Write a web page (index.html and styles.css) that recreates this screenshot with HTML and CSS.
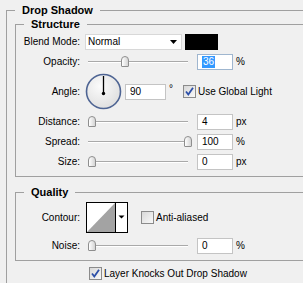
FILE: index.html
```html
<!DOCTYPE html>
<html>
<head>
<meta charset="utf-8">
<link rel="stylesheet" href="styles.css">
</head>
<body>
<div class="outer">
  <div class="title">Drop Shadow</div>
  <div class="group structure">
    <div class="title">Structure</div>
    <div class="rows">
      <div class="row">
        <div class="label">Blend Mode:</div>
        <div class="select"><span>Normal</span>
          <svg class="sel-arrow" width="7" height="4" viewBox="0 0 7 4"><polygon points="0,0 7,0 3.5,4" fill="#000"/></svg>
        </div>
        <div class="swatch"></div>
      </div>
      <div class="row">
        <div class="label">Opacity:</div>
        <div class="slider"><div class="track"></div><div class="thumb" style="left:33px"></div></div>
        <div class="field focused"><span class="sel">36</span></div>
        <div class="unit">%</div>
      </div>
      <div class="row angle-row">
        <div class="label">Angle:</div>
        <svg class="dial" width="37" height="37" viewBox="0 0 37 37">
          <defs>
            <radialGradient id="dg" cx="40%" cy="35%" r="70%">
              <stop offset="0" stop-color="#fbfbfb"/>
              <stop offset="1" stop-color="#dedede"/>
            </radialGradient>
          </defs>
          <circle cx="18.5" cy="18.5" r="17" fill="url(#dg)" stroke="#4e6493" stroke-width="1.6"/>
          <line x1="18.5" y1="3" x2="18.5" y2="20" stroke="#000" stroke-width="1.3"/>
          <circle cx="18.5" cy="20.5" r="1.7" fill="#000"/>
        </svg>
        <div class="field angle-field">90</div>
        <div class="deg">°</div>
        <svg class="check global" width="13" height="13" viewBox="0 0 13 13">
          <defs>
            <linearGradient id="cg" x1="0" y1="0" x2="1" y2="1">
              <stop offset="0" stop-color="#d6d6d6"/>
              <stop offset="1" stop-color="#fafafa"/>
            </linearGradient>
          </defs>
          <rect x="0.5" y="0.5" width="12" height="12" fill="url(#cg)" stroke="#8b8b8b"/>
          <path d="M3 6.5 L5.3 9.5 L10 2.8" fill="none" stroke="#2c4fa8" stroke-width="1.8"/>
        </svg>
        <div class="cb-text">Use Global Light</div>
      </div>
      <div class="row">
        <div class="label">Distance:</div>
        <div class="slider"><div class="track"></div><div class="thumb" style="left:0px"></div></div>
        <div class="field">4</div>
        <div class="unit">px</div>
      </div>
      <div class="row">
        <div class="label">Spread:</div>
        <div class="slider"><div class="track"></div><div class="thumb" style="left:96px"></div></div>
        <div class="field">100</div>
        <div class="unit">%</div>
      </div>
      <div class="row">
        <div class="label">Size:</div>
        <div class="slider"><div class="track"></div><div class="thumb" style="left:0px"></div></div>
        <div class="field">0</div>
        <div class="unit">px</div>
      </div>
    </div>
  </div>
  <div class="group quality">
    <div class="title">Quality</div>
    <div class="rows">
      <div class="row contour-row">
        <div class="label">Contour:</div>
        <svg class="contour" width="42" height="31" viewBox="0 0 42 31">
          <rect x="0" y="0" width="42" height="31" fill="#fff"/>
          <polygon points="1,30 29,1 29,30" fill="#a3a3a3"/>
          <rect x="0.5" y="0.5" width="41" height="30" fill="none" stroke="#000"/>
          <line x1="29.5" y1="0" x2="29.5" y2="31" stroke="#000"/>
          <polygon points="32.5,13.5 38.5,13.5 35.5,16.5" fill="#000"/>
        </svg>
        <svg class="check aa" width="13" height="13" viewBox="0 0 13 13">
          <rect x="0.5" y="0.5" width="12" height="12" fill="url(#cg)" stroke="#8b8b8b"/>
        </svg>
        <div class="cb-text">Anti-aliased</div>
      </div>
      <div class="row noise-row">
        <div class="label">Noise:</div>
        <div class="slider"><div class="track"></div><div class="thumb" style="left:0px"></div></div>
        <div class="field">0</div>
        <div class="unit">%</div>
      </div>
    </div>
  </div>
  <div class="knock">
    <svg class="check" width="13" height="13" viewBox="0 0 13 13">
      <rect x="0.5" y="0.5" width="12" height="12" fill="url(#cg)" stroke="#8b8b8b"/>
      <path d="M3 6.5 L5.3 9.5 L10 2.8" fill="none" stroke="#2c4fa8" stroke-width="1.8"/>
    </svg>
    <div class="cb-text">Layer Knocks Out Drop Shadow</div>
  </div>
</div>
</body>
</html>
```
FILE: styles.css
```css
html, body {
  margin: 0;
  padding: 0;
}
body {
  width: 303px;
  height: 283px;
  overflow: hidden;
  background: #f0f0f0;
  font-family: "Liberation Sans", Arial, sans-serif;
  font-size: 10px;
  color: #000;
}
.outer {
  box-sizing: border-box;
  margin: 10px 0 0 6px;
  width: 297px;
  height: 273px;
  border-top: 1px solid #a0a0a0;
  border-left: 1px solid #a0a0a0;
}
.title {
  width: fit-content;
  height: 13px;
  line-height: 13px;
  margin: -7px 0 0 8px;
  padding: 0 7px;
  background: #f0f0f0;
  font-weight: bold;
  font-size: 11px;
}
.group {
  box-sizing: border-box;
  margin-left: 8px;
  border: 1px solid #a0a0a0;
  border-right: none;
}
.structure {
  margin-top: 7px;
  height: 153px;
}
.quality {
  margin-top: 15px;
  height: 69px;
}
.rows {
  display: flex;
  flex-direction: column;
  gap: 3px;
  margin-top: 2px;
}
.row {
  display: flex;
  align-items: center;
  height: 17px;
}
.angle-row {
  height: 37px;
}
.label {
  width: 64px;
  text-align: right;
  margin-right: 5px;
  flex: none;
}
.select {
  box-sizing: border-box;
  width: 97px;
  height: 16px;
  background: #fff;
  border: 1px solid #d8d8d8;
  display: flex;
  align-items: center;
  justify-content: space-between;
  padding: 0 4px 0 2px;
}
.swatch {
  width: 33px;
  height: 16px;
  margin-left: 3px;
  background: #000;
}
.slider {
  position: relative;
  width: 104px;
  height: 17px;
  margin-left: 3px;
}
.track {
  position: absolute;
  left: 0;
  top: 8px;
  width: 100px;
  height: 0;
  border-top: 1px solid #a9a9a9;
  border-bottom: 1px solid #ffffff;
}
.thumb {
  position: absolute;
  top: 3px;
  box-sizing: border-box;
  width: 8px;
  height: 11px;
  border: 1px solid #8e8e8e;
  border-radius: 4px 4px 1px 1px;
  background: linear-gradient(to right, #ffffff, #d4d4d4);
}
.field {
  box-sizing: border-box;
  width: 36px;
  height: 16px;
  margin-left: 5px;
  background: #fff;
  border: 1px solid #c4c4c4;
  padding-left: 4px;
  line-height: 14px;
}
.field.focused {
  border-color: #9fb6cf;
}
.sel {
  background: #3399ff;
  color: #fff;
  display: inline-block;
  line-height: 12px;
  padding: 0 1px;
}
.unit {
  margin-left: 3px;
}
.dial {
  display: block;
  flex: none;
}
.angle-field {
  width: 41px;
  margin-left: 3px;
}
.deg {
  margin-left: 3px;
  align-self: flex-start;
  margin-top: 10px;
}
.check {
  display: block;
  flex: none;
}
.global {
  margin-left: 10px;
}
.cb-text {
  margin-left: 2px;
}
.contour-row {
  height: 32px;
}
.contour {
  display: block;
  margin-left: 1px;
  margin-top: 1px;
}
.aa {
  margin-left: 13px;
}
.noise-row {
  margin-top: 1px;
}
.knock {
  display: flex;
  align-items: center;
  height: 13px;
  margin: 6px 0 0 82px;
}
```
